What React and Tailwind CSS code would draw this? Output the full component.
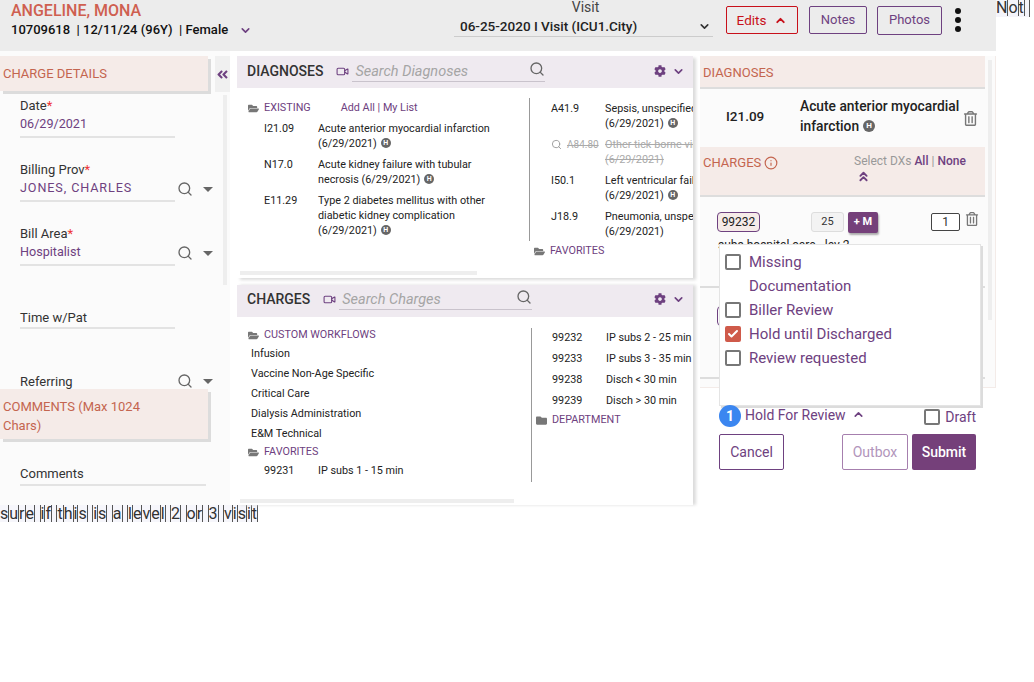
import { Check, ChevronDown, ChevronUp, ChevronsUp, Info, Search, Video } from "lucide-react";
import { FaAngleDoubleLeft, FaCog, FaFolder, FaFolderOpen, FaRegTrashAlt } from "react-icons/fa";

const purple = "text-[#6e4180]";

function HBadge({ big }) {
  return (
    <span
      className={`relative -top-[1px] ml-[4px] inline-flex items-center justify-center rounded-full bg-[#666] align-middle font-bold leading-none text-white ${
        big ? "h-[12px] w-[12px] text-[8px]" : "h-[10px] w-[10px] text-[7px]"
      }`}
    >
      H
    </span>
  );
}

function BorderedLetters({ text }) {
  return (
    <>
      {text.split("").map((ch, i) =>
        ch === " " ? (
          <span key={i} className="inline-block h-[17px] w-[5.5px] border-r border-[#555] align-top" />
        ) : (
          <span key={i} className="inline-block border-r border-[#555]">
            {ch}
          </span>
        )
      )}
    </>
  );
}

function Tools({ top }) {
  return (
    <div className={`absolute left-[157px] flex items-center gap-[10px] text-[#666] ${top}`}>
      <Search size={16} />
      <span className="h-0 w-0 border-x-[5px] border-t-[5px] border-x-transparent border-t-[#666]" />
    </div>
  );
}

function Field({ label, required, value, tools, valueClass = "", className = "" }) {
  return (
    <div className={`relative ml-5 ${className}`}>
      <div className="text-[13px] leading-[18px] text-[#333]">
        {label}
        {required && <span className="text-[#e33]">*</span>}
      </div>
      {value && <div className={`mb-[3px] text-[12.6px] leading-[18px] ${purple} ${valueClass}`}>{value}</div>}
      <div className="h-[2px] w-[155px] bg-[#e3e3e3]" />
      {tools && <Tools top="top-[20px]" />}
    </div>
  );
}

function SectionHead({ children, className = "" }) {
  return (
    <div className={`bg-[#f5ebe8] text-[13px] text-[#c4654f] shadow-[3px_3px_0_#dcdcdc] ${className}`}>
      {children}
    </div>
  );
}

function LeftColumn() {
  return (
    <div className="relative h-[454px] w-[230px] shrink-0 overflow-hidden bg-[#fbfbfb] pt-[5px]">
      <div className="flex items-start">
        <SectionHead className="flex h-[35px] w-[208px] items-center pl-[3px]">CHARGE DETAILS</SectionHead>
        <div className="ml-[7px] flex h-[36px] w-[15px] items-center justify-center bg-[#f0f0f0]">
          <FaAngleDoubleLeft size={13} className="text-[#6e4180]" />
        </div>
      </div>
      <div className="absolute left-[223px] top-[44px] h-[190px] w-[4px] bg-[#eee]" />
      <div className="h-[297px] pt-[5px]">
        <Field label="Date" required value="06/29/2021" />
        <Field label="Billing Prov" required value="JONES, CHARLES" valueClass="tracking-[0.9px]" tools className="mt-[23px]" />
        <Field label="Bill Area" required value="Hospitalist" tools className="mt-[23px]" />
        <Field label="Time w/Pat" className="mt-[43px]" />
        <div className="relative ml-5 mt-[44px] text-[13px] leading-[18px] text-[#333]">
          Referring
          <Tools top="top-0" />
        </div>
      </div>
      <SectionHead className="relative h-[50px] w-[208px] pl-[3px] pt-[8px] leading-[19px]">
        COMMENTS (Max 1024
        <br />
        Chars)
      </SectionHead>
      <div className="ml-5 mt-[26px] w-[186px] border-b-2 border-[#e3e3e3] pb-[2px] text-[13px] leading-[17px] text-[#333]">
        Comments
      </div>
    </div>
  );
}

function PanelHead({ title, placeholder, iconGap, pad }) {
  return (
    <div className={`flex h-[32px] items-center bg-[#efeaf0] pl-[10px] ${pad}`}>
      <span className="text-sm font-medium text-[#333]">{title}</span>
      <Video size={13} className={`${iconGap} text-[#6e4180]`} />
      <div className="relative ml-[3px] h-[22px] w-[193px] border-b border-[#c9c3cc]">
        <span className="block h-[21px] pl-[3px] text-[14.5px] italic leading-[24px] text-[#a5a5a5]">{placeholder}</span>
        <Search size={16} className="absolute right-0 top-[1px] text-[#666]" />
      </div>
      <FaCog size={12} className="ml-auto text-[#6e4180]" />
      <ChevronDown size={13} strokeWidth={3} className="ml-[6px] mr-[8px] text-[#6e4180]" />
    </div>
  );
}

function Folder({ label, closed, className = "" }) {
  const Icon = closed ? FaFolder : FaFolderOpen;
  return (
    <div className={`flex items-center text-[10.8px] leading-[14px] ${purple} ${className}`}>
      <Icon size={11} className="mr-[5px] text-[#777]" />
      {label}
    </div>
  );
}

function Dx({ code, children, struck }) {
  return (
    <div className="flex text-[10.8px] leading-[15px] text-[#222]">
      {struck ? (
        <div className="flex w-[54px] shrink-0 text-[10px] text-[#aaa] line-through">
          <Search size={11} className="mr-[5px] mt-[2px] shrink-0 text-[#999]" />
          {code}
        </div>
      ) : (
        <div className="w-[54px] shrink-0">{code}</div>
      )}
      <div className={struck ? "text-[#aaa] line-through" : ""}>{children}</div>
    </div>
  );
}

function ChargeRow({ code, label }) {
  return (
    <div className="flex h-[21px] items-center whitespace-nowrap text-[10.8px] text-[#222]">
      <span className="w-[54px] shrink-0">{code}</span>
      <span>{label}</span>
    </div>
  );
}

function DiagnosesPanel() {
  return (
    <div className="relative h-[222px] bg-white shadow-[3px_2px_3px_#dcdcdc]">
      <PanelHead title="DIAGNOSES" placeholder="Search Diagnoses" iconGap="ml-[13px]" pad="pb-[2px]" />
      <div className="flex h-[190px] overflow-hidden pt-[10px]">
        <div className="h-[143px] w-[293px] shrink-0 border-r border-[#999] pl-[11px] pt-[3px]">
          <div className="flex items-center">
            <Folder label="EXISTING" />
            <span className={`ml-[30px] text-[10.8px] leading-[14px] ${purple}`}>Add All | My List</span>
          </div>
          <div className="ml-[16px] mt-[6px] flex w-[250px] flex-col gap-[6px]">
            <Dx code="I21.09">
              Acute anterior myocardial infarction
              <br />
              (6/29/2021)
              <HBadge />
            </Dx>
            <Dx code="N17.0">
              Acute kidney failure with tubular
              <br />
              necrosis (6/29/2021)
              <HBadge />
            </Dx>
            <Dx code="E11.29">
              Type 2 diabetes mellitus with other
              <br />
              diabetic kidney complication
              <br />
              (6/29/2021)
              <HBadge />
            </Dx>
          </div>
        </div>
        <div className="min-w-0 flex-1 whitespace-nowrap pt-[3px]">
          <div className="ml-[21px] flex flex-col gap-[6px]">
            <Dx code="A41.9">
              Sepsis, unspecified organism
              <br />
              (6/29/2021)
              <HBadge />
            </Dx>
            <Dx code="A84.80" struck>
              Other tick-borne viral encephalitis
              <br />
              (6/29/2021)
            </Dx>
            <Dx code="I50.1">
              Left ventricular failure
              <br />
              (6/29/2021)
              <HBadge />
            </Dx>
            <Dx code="J18.9">
              Pneumonia, unspecified organism
              <br />
              (6/29/2021)
            </Dx>
          </div>
          <Folder label="FAVORITES" className="ml-[4px] mt-[5px]" />
        </div>
      </div>
      <div className="absolute bottom-[3px] left-[3px] h-[4px] w-[237px] bg-[#eee]" />
    </div>
  );
}

function ChargesPanel() {
  const workflows = ["Infusion", "Vaccine Non-Age Specific", "Critical Care", "Dialysis Administration", "E&M Technical"];
  return (
    <div className="relative mt-[7px] h-[220px] bg-white shadow-[3px_0_3px_#dcdcdc]">
      <PanelHead title="CHARGES" placeholder="Search Charges" iconGap="ml-[13px]" pad="pb-[4px]" />
      <div className="flex overflow-hidden pt-[11px]">
        <div className="h-[154px] w-[295px] shrink-0 border-r border-[#999] pl-[11px]">
          <Folder label="CUSTOM WORKFLOWS" />
          <div className="ml-[3px] mt-[2px]">
            {workflows.map((w) => (
              <div key={w} className="h-[20px] text-[10.8px] leading-[20px] text-[#222]">
                {w}
              </div>
            ))}
          </div>
          <Folder label="FAVORITES" className="mt-[1px]" />
          <div className="ml-[16px] mt-[2px]">
            <ChargeRow code="99231" label="IP subs 1 - 15 min" />
          </div>
        </div>
        <div className="min-w-0 flex-1">
          <div className="ml-[20px]">
            <ChargeRow code="99232" label="IP subs 2 - 25 min" />
            <ChargeRow code="99233" label="IP subs 3 - 35 min" />
            <ChargeRow code="99238" label="Disch < 30 min" />
            <ChargeRow code="99239" label="Disch > 30 min" />
          </div>
          <Folder label="DEPARTMENT" closed className="ml-[4px] mt-[1px]" />
        </div>
      </div>
      <div className="absolute bottom-[2px] left-[3px] h-[4px] w-[274px] bg-[#eee]" />
    </div>
  );
}

function HoldOption({ label, checked, second }) {
  return (
    <div className="flex h-[24px] items-center text-[15px]">
      {second ? (
        <span className="w-[16px]" />
      ) : checked ? (
        <span className="flex h-[16px] w-[16px] items-center justify-center rounded-[2px] bg-[#cf5a4a]">
          <Check size={12} strokeWidth={4} className="text-white" />
        </span>
      ) : (
        <span className="h-[16px] w-[16px] rounded-[2px] border-2 border-[#777]" />
      )}
      <span className={`ml-[8px] ${purple}`}>{label}</span>
    </div>
  );
}

function RightColumn() {
  return (
    <div className="relative h-[454px] w-[296px] shrink-0 pt-[5px]">
      <div className="relative h-[332px] overflow-hidden border-r border-b border-[#f3ebe8] bg-[#fbfbfb]">
        <div className="absolute right-[3px] top-[4px] h-[260px] w-[4px] bg-[#eee]" />
        <div className="mr-[10px] flex h-[33px] items-center border-b-2 border-[#ddd] bg-[#f5ebe8] pl-[3px] pt-[2px] text-[13px] text-[#c4654f]">
          DIAGNOSES
        </div>
        <div className="mr-[8px] flex h-[58px] items-center pb-[4px] pl-[26px]">
          <span className="w-[74px] text-[13.5px] font-medium text-[#222]">I21.09</span>
          <span className="w-[163px] text-[13.8px] font-medium leading-[20px] text-[#222]">
            Acute anterior myocardial infarction
            <HBadge big />
          </span>
          <FaRegTrashAlt size={15} className="mt-[4px] text-[#777]" />
        </div>
        <div className="mr-[10px] flex h-[50px] items-start justify-between border-b-2 border-[#ddd] bg-[#f5ebe8] pl-[3px] pt-[6px]">
          <span className="flex items-center gap-[3px] text-[13px] text-[#c4654f]">
            CHARGES <Info size={14} />
          </span>
          <div className="w-[131px] text-xs leading-[16px] text-[#999]">
            Select DXs <span className={`font-medium ${purple}`}>All</span> |{" "}
            <span className={`font-medium ${purple}`}>None</span>
            <ChevronsUp size={15} strokeWidth={3} className="ml-[2px] text-[#6e4180]" />
          </div>
        </div>
        <div className="relative h-[92px]">
          <div className="absolute left-[17px] top-[15px] flex h-[20px] w-[43px] items-center justify-center rounded-[4px] border border-[#6e4180] bg-[#f5ebe8] text-xs text-[#222]">
            99232
          </div>
          <div className="absolute left-[111px] top-[15px] flex h-[20px] w-[33px] items-center justify-center rounded-[3px] border border-[#ddd] bg-[#f3f3f3] text-[11px] text-[#333]">
            25
          </div>
          <div className="absolute left-[148px] top-[15px] flex h-[21px] w-[30px] items-center justify-center rounded-[2px] bg-[#75407a] text-[11px] font-bold text-white shadow-[1px_2px_2px_#aaa]">
            + M
          </div>
          <div className="absolute left-[231px] top-[16px] flex h-[18px] w-[29px] items-center justify-center rounded-[2px] border border-[#444] bg-white text-xs text-[#333]">
            1
          </div>
          <FaRegTrashAlt size={14} className="absolute left-[265px] top-[15px] text-[#777]" />
          <div className="absolute left-[18px] top-[40px] text-xs text-[#222]">subs hospital care - lev 2</div>
          <div className="absolute left-0 right-[10px] top-[89px] h-[2px] bg-[#ddd]" />
        </div>
        <div className="relative h-[90px]">
          <div className="absolute left-[17px] top-[17px] h-[20px] w-[43px] rounded-[4px] border border-[#6e4180]" />
          <div className="absolute left-0 right-[10px] top-[88px] h-[2px] bg-[#ddd]" />
        </div>
      </div>

      <div className="absolute left-[19px] top-[193px] z-10 h-[162px] w-[262px] border border-[#e4e4e4] bg-white pl-[5px] pt-[5px] shadow-[2px_2px_0_#dcdcdc]">
        <HoldOption label="Missing" />
        <HoldOption label="Documentation" second />
        <HoldOption label="Biller Review" />
        <HoldOption label="Hold until Discharged" checked />
        <HoldOption label="Review requested" />
      </div>

      <div className="relative z-20 ml-[19px] mr-[20px] mt-[17px] flex h-[23px] items-center justify-between">
        <div className="flex items-center pb-[2px]">
          <span className="flex h-[22px] w-[22px] items-center justify-center rounded-full bg-[#3b86f0] text-sm font-bold text-white">
            1
          </span>
          <span className={`mb-[2px] ml-[4px] text-sm ${purple}`}>Hold For Review</span>
          <ChevronUp size={13} strokeWidth={3} className="mb-[2px] ml-[6px] text-[#6e4180]" />
        </div>
        <div className="flex items-center">
          <span className="h-[16px] w-[16px] rounded-[2px] border-2 border-[#777]" />
          <span className={`ml-[5px] text-sm ${purple}`}>Draft</span>
        </div>
      </div>
      <div className="ml-[19px] mr-[20px] mt-[6px] flex h-[36px] items-stretch">
        <button className={`w-[65px] rounded-[2px] border border-[#6e4180] text-sm ${purple}`}>Cancel</button>
        <button className="ml-auto w-[66px] rounded-[2px] border border-[#a67fae] text-sm text-[#b295bb]">Outbox</button>
        <button className="ml-[4px] w-[64px] rounded-[2px] bg-[#75407a] text-sm font-medium text-white">Submit</button>
      </div>
    </div>
  );
}

export default function App() {
  return (
    <div className="h-[682px] w-[1034px] overflow-hidden bg-white font-['Roboto',sans-serif]">
      <div className="flex">
        <header className="flex h-[51px] w-[996px] shrink-0 bg-[#ececec] pl-[11px]">
          <div className="w-[443px] pt-[1px]">
            <div className="text-base font-medium leading-[19px] text-[#cf5f50]">ANGELINE, MONA</div>
            <div className="mt-[1px] flex items-center text-[13px] font-medium leading-[18px] text-[#111]">
              10709618 &nbsp;| 12/11/24 (96Y) &nbsp;| Female
              <ChevronDown size={13} strokeWidth={3} className="ml-[11px] text-[#6e4180]" />
            </div>
          </div>
          <div className="w-[259px] text-center">
            <div className="pl-[4px] text-sm leading-[14px] text-[#444]">Visit</div>
            <div className="mt-[1px] flex h-[22px] items-center border-b border-[#ccc] pl-[6px] pt-[1px] text-[13.5px] font-medium text-[#222]">
              06-25-2020 I Visit (ICU1.City)
              <ChevronDown size={13} strokeWidth={3} className="ml-auto mr-[2px] text-[#333]" />
            </div>
          </div>
          <div className="ml-[13px] mt-[6px] flex h-[28px] items-center self-start">
            <button className="flex h-[28px] w-[72px] items-center justify-center gap-[8px] rounded-[2px] border border-[#c8101a] text-[13.5px] text-[#c8101a]">
              Edits
              <ChevronUp size={13} strokeWidth={3.5} />
            </button>
            <button className={`ml-[11px] h-[28px] w-[58px] rounded-[2px] border border-[#6e4180] text-[13px] ${purple}`}>Notes</button>
            <button className={`ml-[10px] h-[29px] w-[65px] rounded-[2px] border border-[#6e4180] text-[13px] ${purple}`}>Photos</button>
            <div className="ml-[13px] flex flex-col gap-[3px]">
              <span className="h-[6px] w-[6px] rounded-full bg-[#111]" />
              <span className="h-[6px] w-[6px] rounded-full bg-[#111]" />
              <span className="h-[6px] w-[6px] rounded-full bg-[#111]" />
            </div>
          </div>
        </header>
        <div className="self-start whitespace-nowrap bg-[#f4f4fa] text-base leading-[16px] text-[#333]">
          <BorderedLetters text="Not " />
        </div>
      </div>
      <div className="flex">
        <LeftColumn />
        <div className="mx-[7px] w-[456px] shrink-0 pt-[5px]">
          <DiagnosesPanel />
          <ChargesPanel />
        </div>
        <RightColumn />
      </div>
      <div className="h-[17px] w-[258px] whitespace-nowrap bg-[#f6f6fb] text-base leading-[17px] text-[#333]">
        <BorderedLetters text="sure if this is a level 2 or 3 visit" />
      </div>
    </div>
  );
}
